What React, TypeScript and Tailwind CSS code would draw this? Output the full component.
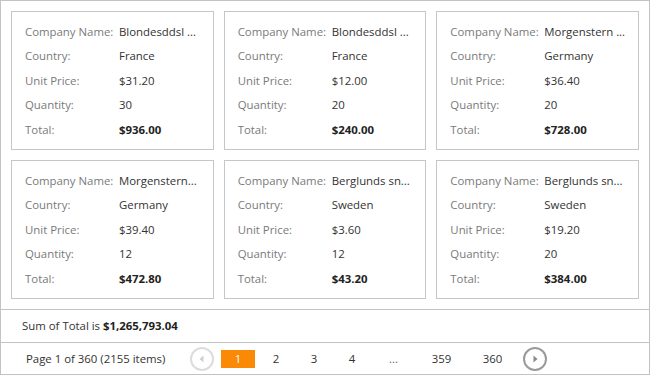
import React from 'react';

interface Order {
  company: string;
  country: string;
  price: string;
  qty: string;
  total: string;
}

const orders: Order[] = [
  { company: 'Blondesddsl ...', country: 'France', price: '$31.20', qty: '30', total: '$936.00' },
  { company: 'Blondesddsl ...', country: 'France', price: '$12.00', qty: '20', total: '$240.00' },
  { company: 'Morgenstern ...', country: 'Germany', price: '$36.40', qty: '20', total: '$728.00' },
  { company: 'Morgenstern...', country: 'Germany', price: '$39.40', qty: '12', total: '$472.80' },
  { company: 'Berglunds sn...', country: 'Sweden', price: '$3.60', qty: '12', total: '$43.20' },
  { company: 'Berglunds sn...', country: 'Sweden', price: '$19.20', qty: '20', total: '$384.00' },
];

function Row({ label, value, bold }: { label: string; value: string; bold?: boolean }) {
  return (
    <div className="flex items-center h-[24.5px]">
      <div className="w-[94px] shrink-0 text-[#7a7a7a]">{label}</div>
      <div className={`whitespace-nowrap ${bold ? 'font-bold text-[#222]' : 'text-[#333]'}`}>
        {value}
      </div>
    </div>
  );
}

function Card({ o }: { o: Order }) {
  return (
    <div className="border border-[#c6c6c6] h-[139px] px-[13px] py-[6px] flex flex-col justify-center">
      <Row label="Company Name:" value={o.company} />
      <Row label="Country:" value={o.country} />
      <Row label="Unit Price:" value={o.price} />
      <Row label="Quantity:" value={o.qty} />
      <Row label="Total:" value={o.total} bold />
    </div>
  );
}

function CircleBtn({ dir, disabled }: { dir: 'prev' | 'next'; disabled?: boolean }) {
  const c = disabled ? '#dcdcdc' : '#9a9a9a';
  return (
    <svg width="24" height="24" viewBox="0 0 24 24" className="shrink-0">
      <circle cx="12" cy="12" r="11" fill="none" stroke={c} strokeWidth="2" />
      {dir === 'prev' ? (
        <path d="M13.5 8.5 L9.5 12 L13.5 15.5 Z" fill={disabled ? '#d0d0d0' : '#8a8a8a'} />
      ) : (
        <path d="M10.5 8.5 L14.5 12 L10.5 15.5 Z" fill={disabled ? '#d0d0d0' : '#8a8a8a'} />
      )}
    </svg>
  );
}

export default function App() {
  return (
    <div
      className="w-[650px] h-[375px] bg-white border border-[#c3c3c3] flex flex-col text-[11.4px]"
      style={{ fontFamily: '"Open Sans", "Noto Sans", sans-serif' }}
    >
      <div className="grid grid-cols-3 gap-[10px] p-[10px]">
        {orders.map((o, i) => (
          <Card key={i} o={o} />
        ))}
      </div>
      <div className="border-t border-[#c3c3c3] h-[33px] flex items-center pl-[21px] text-[#333]">
        Sum of Total is&nbsp;<span className="font-bold text-[#222]">$1,265,793.04</span>
      </div>
      <div className="border-t border-[#c3c3c3] flex-1 flex items-center pl-[25px] text-[#333]">
        <span className="w-[164px] shrink-0">Page 1 of 360 (2155 items)</span>
        <CircleBtn dir="prev" disabled />
        <div className="flex items-center gap-[4px] mx-[7px]">
          <span className="w-[34px] h-[18px] flex items-center justify-center bg-[#fa8a05] text-white">1</span>
          <span className="w-[34px] h-[18px] flex items-center justify-center">2</span>
          <span className="w-[34px] h-[18px] flex items-center justify-center">3</span>
          <span className="w-[34px] h-[18px] flex items-center justify-center">4</span>
          <span className="w-[41px] h-[18px] flex items-center justify-center text-[#666]">...</span>
          <span className="w-[47px] h-[18px] flex items-center justify-center">359</span>
          <span className="w-[47px] h-[18px] flex items-center justify-center">360</span>
        </div>
        <CircleBtn dir="next" />
      </div>
    </div>
  );
}
